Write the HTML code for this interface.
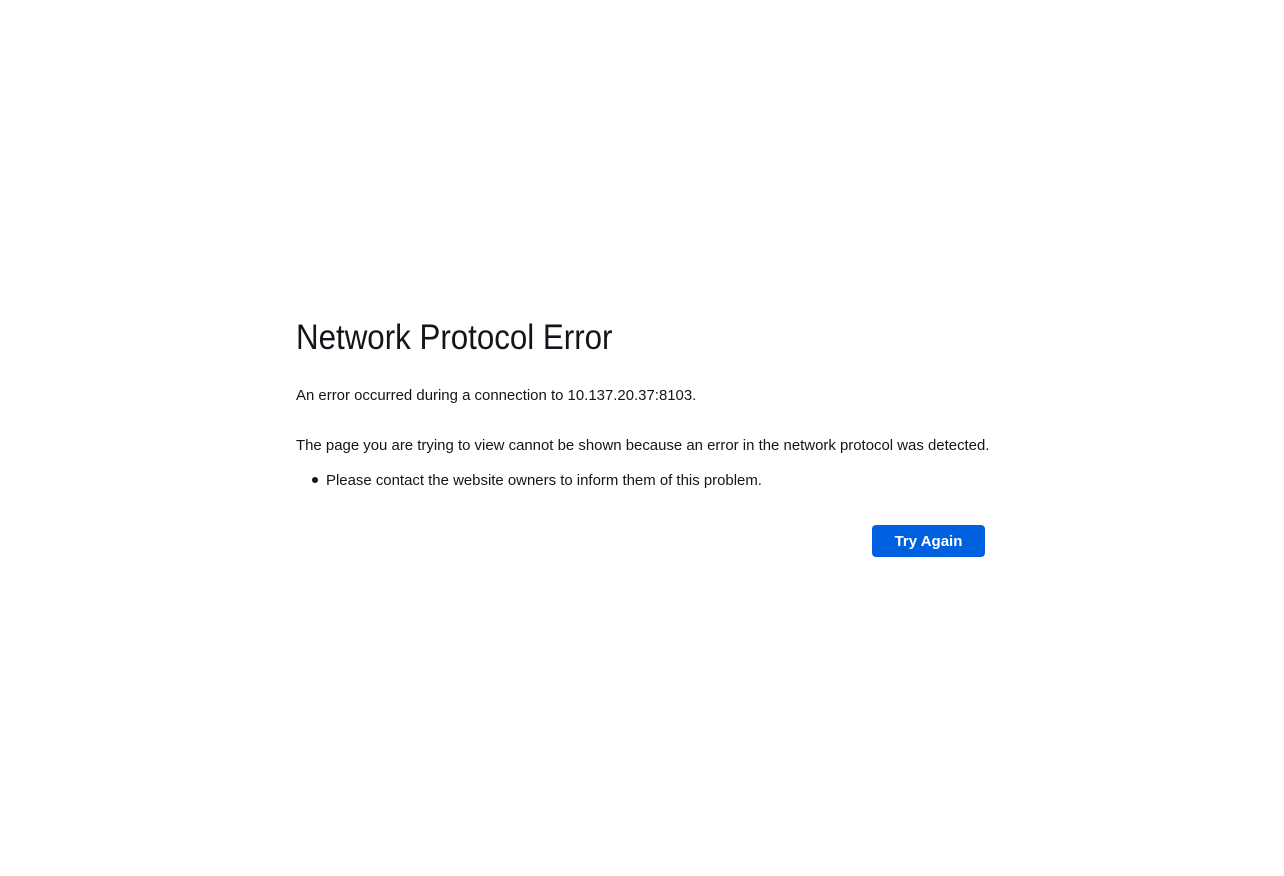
<!DOCTYPE html>
<html><head><meta charset="utf-8"><style>
html,body{margin:0;padding:0;background:#fff;width:1284px;height:876px;overflow:hidden;font-family:"Liberation Sans","DejaVu Sans",sans-serif;color:#15141a}
.t{position:absolute;left:296px;white-space:nowrap}
h1{position:absolute;left:296px;top:317px;margin:0;font-weight:300;font-size:35px;line-height:42px;transform:scaleX(0.894);transform-origin:left;white-space:nowrap;color:#15141a}
.p{font-size:15px;line-height:20px;transform:scaleX(0.996);transform-origin:left}
.dot{position:absolute;left:312px;top:477px;width:6px;height:6px;border-radius:50%;background:#15141a}
.btn{position:absolute;left:872px;top:525px;width:113px;height:32px;background:#0061e0;border-radius:4px;color:#fff;font-size:15px;font-weight:bold;line-height:34px;text-align:center}
</style></head><body>
<h1>Network Protocol Error</h1>
<div class="t p" style="top:386px">An error occurred during a connection to 10.137.20.37:8103.</div>
<div class="t p" style="top:436px">The page you are trying to view cannot be shown because an error in the network protocol was detected.</div>
<div class="dot"></div>
<div class="t p" style="left:326px;top:471px">Please contact the website owners to inform them of this problem.</div>
<div class="btn">Try Again</div>
</body></html>
